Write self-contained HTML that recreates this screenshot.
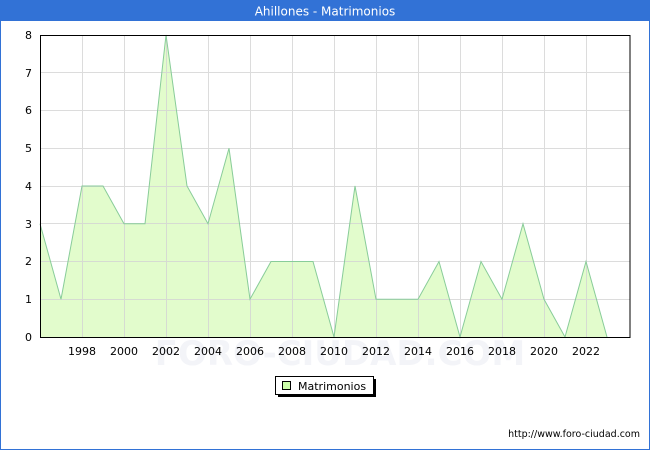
<!DOCTYPE html>
<html><head><meta charset="utf-8"><style>
body{margin:0;width:650px;height:450px;overflow:hidden;font-family:"DejaVu Sans","Liberation Sans",sans-serif;}
</style></head><body>
<svg width="650" height="450" xmlns="http://www.w3.org/2000/svg" font-family="DejaVu Sans, Liberation Sans, sans-serif">
<rect x="0" y="0" width="650" height="450" fill="#fff"/>
<rect x="0.5" y="0.5" width="649" height="449" fill="none" stroke="#3272d6"/>
<rect x="0" y="0" width="650" height="21" fill="#3272d6"/>
<text x="325" y="15.5" fill="#fff" font-size="12" text-anchor="middle">Ahillones - Matrimonios</text>
<text x="340" y="365" fill="#f3f4f8" font-size="34" text-anchor="middle" font-weight="bold">FORO-CIUDAD.COM</text>
<polygon fill="#e2fccc" stroke="none" points="40,337 40,223.75 61,299.25 82,186 103,186 124,223.75 145,223.75 166,35 187,186 208,223.75 229,148.25 250,299.25 271,261.5 292,261.5 313,261.5 334,337 355,186 376,299.25 397,299.25 418,299.25 439,261.5 460,337 481,261.5 502,299.25 523,223.75 544,299.25 565,337 586,261.5 607,337"/>
<g stroke="#d4d4d4" stroke-width="1" opacity="0.8">
<line x1="40" x2="630" y1="299.5" y2="299.5"/><line x1="40" x2="630" y1="261.5" y2="261.5"/><line x1="40" x2="630" y1="223.5" y2="223.5"/><line x1="40" x2="630" y1="186.5" y2="186.5"/><line x1="40" x2="630" y1="148.5" y2="148.5"/><line x1="40" x2="630" y1="110.5" y2="110.5"/><line x1="40" x2="630" y1="72.5" y2="72.5"/>
<line x1="82.5" x2="82.5" y1="35" y2="337"/><line x1="124.5" x2="124.5" y1="35" y2="337"/><line x1="166.5" x2="166.5" y1="35" y2="337"/><line x1="208.5" x2="208.5" y1="35" y2="337"/><line x1="250.5" x2="250.5" y1="35" y2="337"/><line x1="292.5" x2="292.5" y1="35" y2="337"/><line x1="334.5" x2="334.5" y1="35" y2="337"/><line x1="376.5" x2="376.5" y1="35" y2="337"/><line x1="418.5" x2="418.5" y1="35" y2="337"/><line x1="460.5" x2="460.5" y1="35" y2="337"/><line x1="502.5" x2="502.5" y1="35" y2="337"/><line x1="544.5" x2="544.5" y1="35" y2="337"/><line x1="586.5" x2="586.5" y1="35" y2="337"/>
</g>
<polyline fill="none" stroke="#88cc99" stroke-width="1" points="40,223.75 61,299.25 82,186 103,186 124,223.75 145,223.75 166,35 187,186 208,223.75 229,148.25 250,299.25 271,261.5 292,261.5 313,261.5 334,337 355,186 376,299.25 397,299.25 418,299.25 439,261.5 460,337 481,261.5 502,299.25 523,223.75 544,299.25 565,337 586,261.5 607,337"/>
<rect x="40.5" y="35.5" width="589.5" height="302" fill="none" stroke="#000"/>
<g font-size="11" fill="#000" text-anchor="end">
<text x="32" y="341">0</text><text x="32" y="303">1</text><text x="32" y="265">2</text><text x="32" y="228">3</text><text x="32" y="190">4</text><text x="32" y="152">5</text><text x="32" y="114">6</text><text x="32" y="77">7</text><text x="32" y="39">8</text>
</g>
<g font-size="11" fill="#000" text-anchor="middle">
<text x="82" y="355">1998</text><text x="124" y="355">2000</text><text x="166" y="355">2002</text><text x="208" y="355">2004</text><text x="250" y="355">2006</text><text x="292" y="355">2008</text><text x="334" y="355">2010</text><text x="376" y="355">2012</text><text x="418" y="355">2014</text><text x="460" y="355">2016</text><text x="502" y="355">2018</text><text x="544" y="355">2020</text><text x="586" y="355">2022</text>
</g>
<rect x="278" y="379" width="98" height="18" fill="#000"/>
<rect x="275.5" y="376.5" width="98" height="18" fill="#fff" stroke="#000"/>
<rect x="282.5" y="381.5" width="8" height="8" fill="#ccffaa" stroke="#000"/>
<text x="298" y="390" font-size="11">Matrimonios</text>
<text x="640" y="437" font-size="9.5" text-anchor="end">http://www.foro-ciudad.com</text>
</svg>
</body></html>
